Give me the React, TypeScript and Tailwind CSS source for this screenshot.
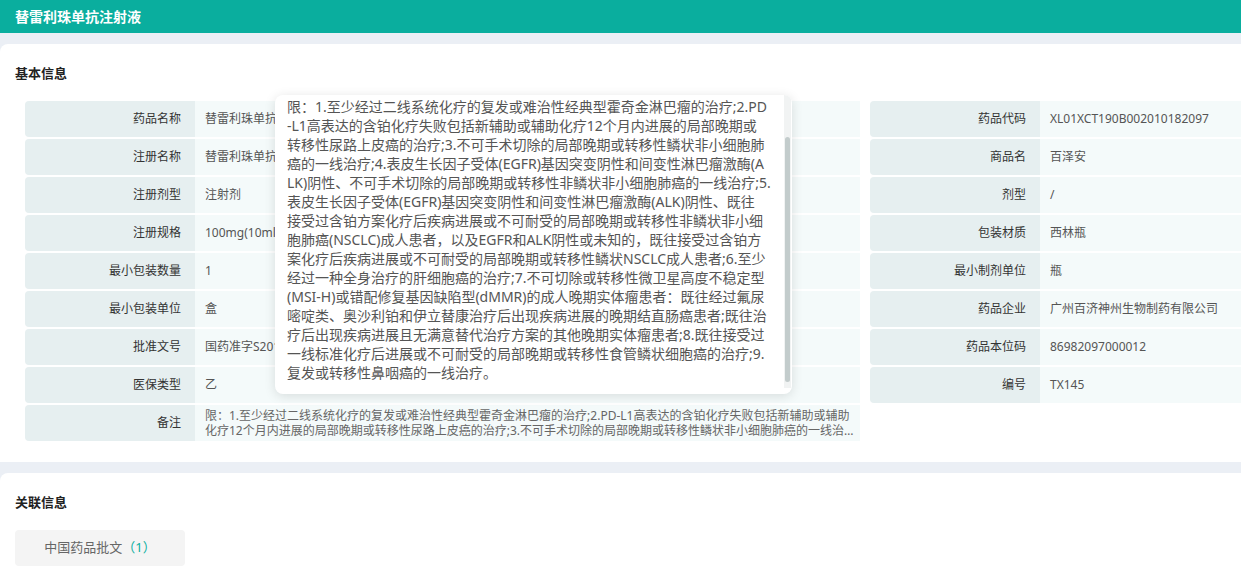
import React from 'react';

const leftRows: [string, string][] = [
  ['药品名称', '替雷利珠单抗注射液'],
  ['注册名称', '替雷利珠单抗注射液'],
  ['注册剂型', '注射剂'],
  ['注册规格', '100mg(10ml)/瓶'],
  ['最小包装数量', '1'],
  ['最小包装单位', '盒'],
  ['批准文号', '国药准字S20190045'],
  ['医保类型', '乙'],
];

const rightRows: [string, string][] = [
  ['药品代码', 'XL01XCT190B002010182097'],
  ['商品名', '百泽安'],
  ['剂型', '/'],
  ['包装材质', '西林瓶'],
  ['最小制剂单位', '瓶'],
  ['药品企业', '广州百济神州生物制药有限公司'],
  ['药品本位码', '86982097000012'],
  ['编号', 'TX145'],
];

const remark =
  '限：1.至少经过二线系统化疗的复发或难治性经典型霍奇金淋巴瘤的治疗;2.PD-L1高表达的含铂化疗失败包括新辅助或辅助化疗12个月内进展的局部晚期或转移性尿路上皮癌的治疗;3.不可手术切除的局部晚期或转移性鳞状非小细胞肺癌的一线治疗;4.表皮生长因子受体(EGFR)基因突变阴性和间变性淋巴瘤激酶(ALK)阴性、不可手术切除的局部晚期或转移性非鳞状非小细胞肺癌的一线治疗;5.表皮生长因子受体(EGFR)基因突变阴性和间变性淋巴瘤激酶(ALK)阴性、既往接受过含铂方案化疗后疾病进展或不可耐受的局部晚期或转移性非鳞状非小细胞肺癌(NSCLC)成人患者，以及EGFR和ALK阴性或未知的，既往接受过含铂方案化疗后疾病进展或不可耐受的局部晚期或转移性鳞状NSCLC成人患者;6.至少经过一种全身治疗的肝细胞癌的治疗;7.不可切除或转移性微卫星高度不稳定型(MSI-H)或错配修复基因缺陷型(dMMR)的成人晚期实体瘤患者：既往经过氟尿嘧啶类、奥沙利铂和伊立替康治疗后出现疾病进展的晚期结直肠癌患者;既往治疗后出现疾病进展且无满意替代治疗方案的其他晚期实体瘤患者;8.既往接受过一线标准化疗后进展或不可耐受的局部晚期或转移性食管鳞状细胞癌的治疗;9.复发或转移性鼻咽癌的一线治疗。';

// tooltip lines, wrapped the way the reference shows them
const tipLines = [
  '限：1.至少经过二线系统化疗的复发或难治性经典型霍奇金淋巴瘤的治疗;2.PD',
  '-L1高表达的含铂化疗失败包括新辅助或辅助化疗12个月内进展的局部晚期或',
  '转移性尿路上皮癌的治疗;3.不可手术切除的局部晚期或转移性鳞状非小细胞肺',
  '癌的一线治疗;4.表皮生长因子受体(EGFR)基因突变阴性和间变性淋巴瘤激酶(A',
  'LK)阴性、不可手术切除的局部晚期或转移性非鳞状非小细胞肺癌的一线治疗;5.',
  '表皮生长因子受体(EGFR)基因突变阴性和间变性淋巴瘤激酶(ALK)阴性、既往',
  '接受过含铂方案化疗后疾病进展或不可耐受的局部晚期或转移性非鳞状非小细',
  '胞肺癌(NSCLC)成人患者，以及EGFR和ALK阴性或未知的，既往接受过含铂方',
  '案化疗后疾病进展或不可耐受的局部晚期或转移性鳞状NSCLC成人患者;6.至少',
  '经过一种全身治疗的肝细胞癌的治疗;7.不可切除或转移性微卫星高度不稳定型',
  '(MSI-H)或错配修复基因缺陷型(dMMR)的成人晚期实体瘤患者：既往经过氟尿',
  '嘧啶类、奥沙利铂和伊立替康治疗后出现疾病进展的晚期结直肠癌患者;既往治',
  '疗后出现疾病进展且无满意替代治疗方案的其他晚期实体瘤患者;8.既往接受过',
  '一线标准化疗后进展或不可耐受的局部晚期或转移性食管鳞状细胞癌的治疗;9.',
  '复发或转移性鼻咽癌的一线治疗。',
];

const InfoRow: React.FC<{ label: string; value: string }> = ({ label, value }) => (
  <div className="flex h-[36px] text-[12px]">
    <div className="w-[170px] shrink-0 flex items-center justify-end pr-[14px] bg-[#e6eff0] text-[#333] rounded-l-[4px]">
      {label}
    </div>
    <div className="flex-1 flex items-center pl-[10px] bg-[#f4fafa] text-[#555] whitespace-nowrap overflow-hidden">
      {value}
    </div>
  </div>
);

export default function App() {
  return (
    <div className="min-h-screen bg-[#ebeff5] font-['Noto_Sans','Noto_Sans_CJK_SC',sans-serif] overflow-hidden">
      <header className="h-[33px] bg-[#0aae9e] px-[15px] flex items-center text-white font-bold text-[14px]">
        替雷利珠单抗注射液
      </header>

      <section className="relative mt-[11px] bg-white rounded-tl-[8px] pt-[20px] pb-[21px]">
        <h2 className="px-[15px] text-[13px] leading-[18px] font-bold text-[#222]">基本信息</h2>
        <div className="mt-[19px] pl-[25px] flex gap-[10px]">
          <div className="w-[835px] flex flex-col gap-[2px]">
            {leftRows.map(([l, v]) => (
              <InfoRow key={l} label={l} value={v} />
            ))}
            <div className="flex h-[36px] text-[12px]">
              <div className="w-[170px] shrink-0 flex items-center justify-end pr-[14px] bg-[#e6eff0] text-[#333] rounded-l-[4px]">
                备注
              </div>
              <div className="flex-1 flex items-center pl-[10px] pr-[5px] bg-[#f4fafa] text-[#666]">
                <p className="line-clamp-2 break-all leading-[15px]">{remark}</p>
              </div>
            </div>
          </div>
          <div className="flex-1 flex flex-col gap-[2px]">
            {rightRows.map(([l, v]) => (
              <InfoRow key={l} label={l} value={v} />
            ))}
          </div>
        </div>

        {/* hover tooltip for 备注 */}
        <div className="absolute left-[275px] top-[51px] w-[517px] h-[299px] bg-white rounded-[8px] shadow-[0_2px_12px_rgba(0,0,0,0.12)] overflow-hidden">
          <div className="pl-[12px] pt-[2px] text-[14px] leading-[19px] text-[#555]">
            {tipLines.map((line, i) => (
              <div key={i} className="whitespace-nowrap">{line}</div>
            ))}
          </div>
          <div className="absolute right-[1px] top-0 bottom-[6px] w-[7px] bg-[#f1f3f3]">
            <div className="absolute left-[1px] right-[1px] top-[42px] h-[245px] rounded-[3px] bg-[#c3cccc]" />
          </div>
        </div>
      </section>

      <section className="mt-[11px] bg-white rounded-tl-[8px] pt-[20px] pb-[10px]">
        <h2 className="px-[15px] text-[13px] leading-[18px] font-bold text-[#222]">关联信息</h2>
        <div className="mt-[19px] px-[15px]">
          <button className="w-[170px] h-[36px] rounded-[4px] bg-[#f4f4f4] text-[13px] text-[#666]">
            中国药品批文<span className="text-[#0aae9e]">（1）</span>
          </button>
        </div>
      </section>
    </div>
  );
}
